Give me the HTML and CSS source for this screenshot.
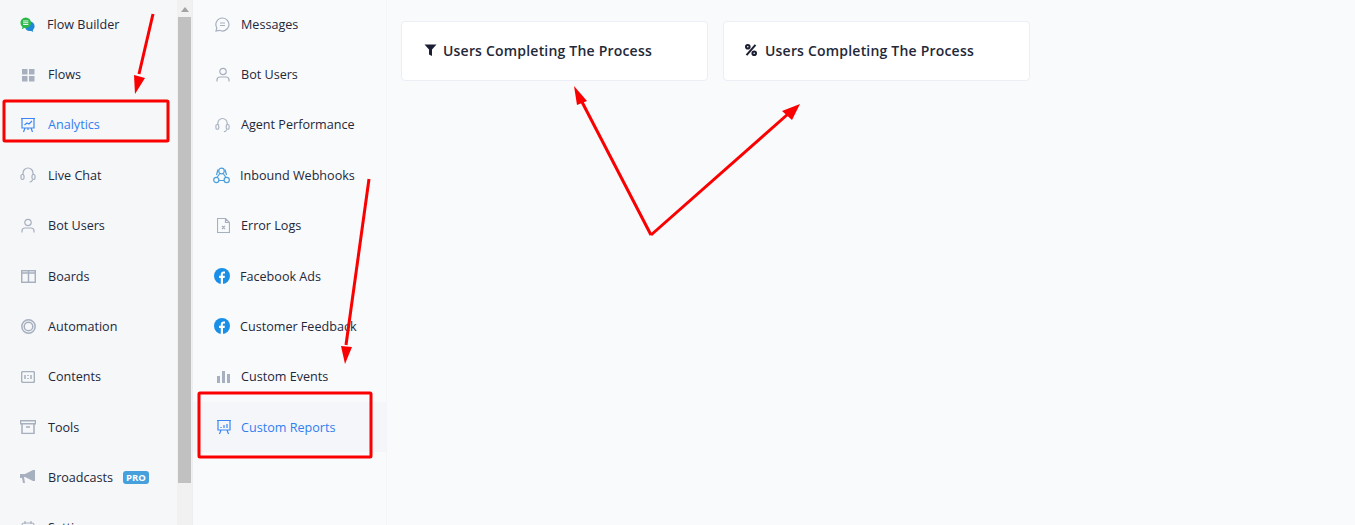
FILE: index.html
```html
<!DOCTYPE html>
<html>
	<head>
		<title>Custom Reports</title>
		<link rel="stylesheet" href="styles.css">
	</head>
	<body>
		<div class="app">
			<div class="sidebar">
				<a class="item nudgeLeft"><span class="icon"><svg width="17" height="17" viewBox="0 0 17 17"><circle cx="11" cy="10.500" r="5.500" fill="#1e88d8"/><path d="M11 15l4 2-1-4z" fill="#1e88d8"/><circle cx="6.500" cy="6.500" r="6" fill="#2bb84a"/><path d="M3 11l-1 3 4-2z" fill="#2bb84a"/><path d="M3.500 4.500h6M3.500 6.500h6M3.500 8.500h6" stroke="#fff"/></svg></span>Flow Builder</a>
				<a class="item"><span class="icon"><svg width="14" height="14" viewBox="0 0 14 14" fill="#a7b0bf"><rect x="1" y="1" width="5.500" height="5.500"/><rect x="8" y="1" width="5.500" height="5.500"/><rect x="1" y="8" width="5.500" height="5.500"/><rect x="8" y="8" width="5.500" height="5.500"/></svg></span>Flows</a>
				<a class="item active"><span class="icon"><svg class="stroke blue" width="16" height="16" viewBox="0 0 16 16"><path d="M1 1.500h14M2 1.500v9.500h12v-9.500M5 11l-1.500 4M11 11l1.500 4M8 11v2M4.500 8l2.500-2 2 1 3-3"/></svg></span>Analytics</a>
				<a class="item"><span class="icon"><svg class="stroke" width="16" height="16" viewBox="0 0 16 16"><path d="M3 8v-2a5 5 0 0 1 10 0v2M12.500 13a3 3 0 0 1-3 2"/><rect x="1" y="7.500" width="3" height="5" rx="1.400"/><rect x="12" y="7.500" width="3" height="5" rx="1.400"/></svg></span>Live Chat</a>
				<a class="item"><span class="icon"><svg class="stroke" width="14" height="16" viewBox="0 0 14 16"><circle cx="7" cy="4.500" r="3.200"/><path d="M1 14.500v-1.500a3 3 0 0 1 3-3h6a3 3 0 0 1 3 3v1.500"/></svg></span>Bot Users</a>
				<a class="item"><span class="icon"><svg class="stroke heavy" width="15" height="13" viewBox="0 0 15 13"><rect x="0.700" y="0.700" width="13.600" height="11.600"/><path d="M7.500 0.500v12M0.500 3h14"/></svg></span>Boards</a>
				<a class="item"><span class="icon"><svg class="stroke heavy" width="15" height="15" viewBox="0 0 15 15"><circle cx="7.500" cy="7.500" r="6.700"/><circle cx="7.500" cy="7.500" r="4.300"/></svg></span>Automation</a>
				<a class="item"><span class="icon"><svg class="stroke heavy" width="14" height="12" viewBox="0 0 14 12"><rect x="0.600" y="0.600" width="12.800" height="10.800" rx="1.500"/><path d="M4 4v4M7 4v1M7 7v1M10 4v4"/></svg></span>Contents</a>
				<a class="item"><span class="icon"><svg class="stroke heavy" width="16" height="14" viewBox="0 0 16 14"><path d="M0.500 0.700h15v3h-15zM2 3.700v9.700h12v-9.700M6 7h4"/></svg></span>Tools</a>
				<a class="item"><span class="icon"><svg class="shiftLeft" width="16" height="14" viewBox="0 0 16 14" fill="#a7b0bf"><path d="M0 4h5l8-4h2v11h-2l-8-4v0H4l1 6H3L2 8H0z"/></svg></span>Broadcasts<span class="pro">PRO</span></a>
				<a class="item"><span class="icon"><svg class="stroke" width="14" height="14" viewBox="0 0 14 14"><rect x="1" y="2" width="12" height="11" rx="2"/><path d="M4 0v3M10 0v3"/></svg></span>Settings</a>
			</div>
			<div class="scrollbar">
				<div class="scrollUp"></div>
				<div class="thumb"></div>
			</div>
			<div class="submenu">
				<a class="item"><span class="icon"><svg class="stroke" width="15" height="15" viewBox="0 0 15 15"><path d="M7.500 1a6.500 6.500 0 1 1-3 12.300L1 14l.8-3.200A6.500 6.500 0 0 1 7.500 1zM5 6h5M5 8.500h5"/></svg></span>Messages</a>
				<a class="item"><span class="icon"><svg class="stroke" width="14" height="16" viewBox="0 0 14 16"><circle cx="7" cy="4.500" r="3.200"/><path d="M1 14.500v-1.500a3 3 0 0 1 3-3h6a3 3 0 0 1 3 3v1.500"/></svg></span>Bot Users</a>
				<a class="item"><span class="icon"><svg class="stroke" width="15" height="16" viewBox="0 0 16 16"><path d="M3 8v-2a5 5 0 0 1 10 0v2M12.500 13a3 3 0 0 1-3 2"/><rect x="1" y="7.500" width="3" height="5" rx="1.400"/><rect x="12" y="7.500" width="3" height="5" rx="1.400"/></svg></span>Agent Performance</a>
				<a class="item nudgeLeft"><span class="icon"><svg class="stroke blue2" width="17" height="17" viewBox="0 0 17 17"><circle cx="8.500" cy="4" r="2.800"/><circle cx="3.300" cy="13" r="2.600"/><circle cx="13.700" cy="13" r="2.600"/><path d="M6.800 6.500L4 10.500M10.200 6.500L13 10.500M6 13.500h5M5 2.500L3.500 8M12 2.500l1.500 5.500"/></svg></span>Inbound Webhooks</a>
				<a class="item"><span class="icon"><svg class="stroke" width="13" height="15" viewBox="0 0 13 15"><path d="M0.500 0.500h8l4 4v10h-12zM8.500 0.500v4h4M5 8l3 3M8 8l-3 3"/></svg></span>Error Logs</a>
				<a class="item nudgeLeft"><span class="icon"><svg width="16" height="16" viewBox="0 0 16 16"><circle cx="8" cy="8" r="8" fill="#1a8fe8"/><path d="M6.800 16v-6H5V7.800h1.800V6.300c0-1.900 1.100-2.900 2.800-2.900l1.400.1v1.900h-1c-.9 0-1.200.5-1.200 1.100v1.300h2.100l-.3 2.200H9v6z" fill="#fff"/></svg></span>Facebook Ads</a>
				<a class="item nudgeLeft"><span class="icon"><svg width="16" height="16" viewBox="0 0 16 16"><circle cx="8" cy="8" r="8" fill="#1a8fe8"/><path d="M6.800 16v-6H5V7.800h1.800V6.300c0-1.900 1.100-2.900 2.800-2.900l1.400.1v1.900h-1c-.9 0-1.200.5-1.200 1.100v1.300h2.100l-.3 2.200H9v6z" fill="#fff"/></svg></span>Customer Feedback</a>
				<a class="item"><span class="icon"><svg width="13" height="12" viewBox="0 0 13 12" fill="#a7b0bf"><rect x="0" y="5" width="3" height="7"/><rect x="5" y="0" width="3" height="12"/><rect x="10" y="3" width="3" height="9"/></svg></span>Custom Events</a>
				<a class="item active selected"><span class="icon"><svg class="stroke blue" width="16" height="16" viewBox="0 0 16 16"><path d="M1 1.500h14M2 1.500v9.500h12v-9.500M5 11l-1.500 4M11 11l1.500 4M5 9v-1M8 9v-3M11 9v-4"/></svg></span>Custom Reports</a>
			</div>
			<div class="main">
				<div class="card">
					<svg width="13" height="12" viewBox="0 0 13 12"><path d="M0.500 0.500h12l-4.500 5v6.500l-3-1.500v-5z" fill="#1c1f33"/></svg>
					<span>Users Completing The Process</span>
				</div>
				<div class="card">
					<svg class="percent" width="12" height="12" viewBox="0 0 12 12"><circle cx="2.800" cy="2.800" r="1.800"/><circle cx="9.200" cy="9.200" r="1.800"/><path d="M10.500 0.800L1.500 11.200"/></svg>
					<span>Users Completing The Process</span>
				</div>
			</div>
		</div>
		<svg class="marks" width="1355" height="525" viewBox="0 0 1355 525">
			<rect class="box" x="4" y="101" width="164" height="40" rx="1"/>
			<rect class="box" x="199" y="393" width="172" height="64" rx="1"/>
			<path class="line" d="M153 14L139 74"/>
			<path class="head" d="M134 75L145 78L135 94z"/>
			<path class="line" d="M369 179L346 345"/>
			<path class="head" d="M341 346L352 347L345 364z"/>
			<path class="line" d="M651 235L581 100"/>
			<path class="head" d="M574 86L587 101L577 105z"/>
			<path class="line" d="M651 235L788 114"/>
			<path class="head" d="M800 104L792 120L782 111z"/>
		</svg>
	</body>
</html>
```
FILE: styles.css
```css
html, body {
	margin: 0;
	height: 100%;
	overflow: hidden;
}
body {
	font-family: "Open Sans", sans-serif;
	font-size: 12.600px;
	color: #232839;
	background-color: #f9fafc;
}
.app {
	display: flex;
	height: 525px;
	overflow: hidden;
}
.sidebar {
	width: 177px;
	flex: none;
	background-color: #f6f7f9;
}
.scrollbar {
	width: 16px;
	flex: none;
	display: flex;
	flex-direction: column;
	align-items: center;
	background-color: #f1f1f1;
	border-right: 1px solid #eceef2;
	box-sizing: border-box;
}
.scrollUp {
	margin-top: 7px;
	margin-bottom: 5px;
	border-left: 4px solid transparent;
	border-right: 4px solid transparent;
	border-bottom: 5px solid #a3a3a3;
}
.thumb {
	width: 13px;
	height: 466px;
	background-color: #c1c1c1;
	margin-left: -1px;
}
.submenu {
	width: 194px;
	flex: none;
	box-sizing: border-box;
	border-right: 1px solid #f4f5f8;
}
.item {
	display: flex;
	align-items: center;
	height: 50.350px;
	padding-left: 20px;
	white-space: nowrap;
}
.sidebar .item:first-child, .submenu .item:first-child {
	margin-top: -0.900px;
}
.icon {
	width: 28px;
	flex: none;
	display: flex;
	align-items: center;
	padding-right: 12px;
	box-sizing: border-box;
	justify-content: center;
}
.nudgeLeft .icon {
	width: 27px;
}
.submenu .icon {
	justify-content: flex-end;
	padding-right: 11px;
}
.submenu .nudgeLeft .icon {
	padding-right: 10px;
}
.submenu .selected svg {
	margin-right: -2px;
}
.shiftLeft {
	margin-left: -1px;
}
.item.active {
	color: #2f7ff0;
}
.item.selected {
	background-color: #f5f6fa;
}
.stroke {
	fill: none;
	stroke: #a7b0bf;
	stroke-width: 1.200;
}
.stroke.heavy {
	stroke-width: 1.500;
}
.stroke.blue {
	stroke: #3d87f2;
}
.stroke.blue2 {
	stroke: #4c9fdc;
}
.pro {
	margin-left: 10px;
	padding: 0 3px;
	font-size: 9.500px;
	line-height: 13px;
	font-weight: 700;
	color: #fff;
	background-color: #45a0dc;
	border-radius: 3px;
}
.main {
	flex: 1;
	display: flex;
	align-items: flex-start;
	gap: 15px;
	padding: 21px 0 0 14px;
}
.card {
	width: 307px;
	height: 60px;
	box-sizing: border-box;
	display: flex;
	align-items: center;
	gap: 6px;
	padding: 0 0 2px 22px;
	background-color: #fff;
	border: 1px solid #eceef5;
	border-radius: 4px;
	font-size: 14px;
	font-weight: 600;
	letter-spacing: 0.200px;
	color: #232839;
}
.percent {
	margin-left: -1px;
	margin-right: 2px;
	fill: none;
	stroke: #1c1f33;
	stroke-width: 2;
}
.marks {
	position: absolute;
	left: 0;
	top: 0;
	pointer-events: none;
}
.box {
	fill: none;
	stroke: #fa0000;
	stroke-width: 3;
}
.line {
	fill: none;
	stroke: #fa0000;
	stroke-width: 3;
}
.head {
	fill: #fa0000;
}
```
